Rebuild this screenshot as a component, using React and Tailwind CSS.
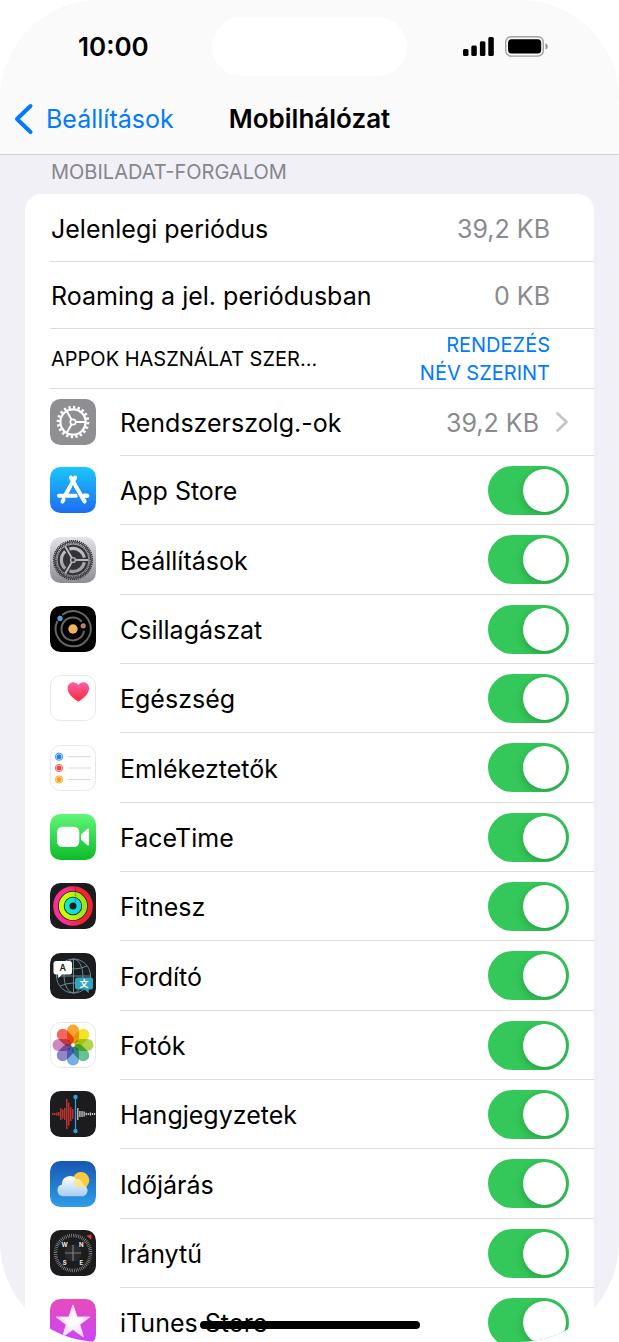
import React, { useState } from "react";

const SystemIcon = () => (
  <svg viewBox="0 0 46 46" className="mb-px size-[46px] shrink-0" aria-hidden="true">
    <rect width="46" height="46" rx="10.5" fill="#8e8e93" />
    <g fill="none" stroke="#fff">
      <circle cx="23" cy="23" r="14.8" strokeWidth="3" pathLength="80" strokeDasharray="2 2" />
      <circle cx="23" cy="23" r="12.6" strokeWidth="2.2" />
      <circle cx="23" cy="23" r="2.7" strokeWidth="1.7" />
      <path d="M26 23h9.500M21.5 20.4L16.800 12.200M21.5 25.6L16.800 33.800" strokeWidth="2" />
    </g>
  </svg>
);

const AppStoreIcon = () => (
  <svg viewBox="0 0 46 46" className="mb-px size-[46px] shrink-0" aria-hidden="true">
    <defs>
      <linearGradient id="appstore" x1="0" y1="0" x2="0" y2="1">
        <stop offset="0" stopColor="#1bc6fb" />
        <stop offset="1" stopColor="#1d6cf2" />
      </linearGradient>
    </defs>
    <rect width="46" height="46" rx="10.5" fill="url(#appstore)" />
    <g strokeLinecap="round" fill="none">
      <path d="M25.200 10.600L15.600 27.600M9 28.800H26M31.500 28.800H37.300M13.600 32.600L12.500 34.600" stroke="#fff" strokeWidth="4" />
      <path d="M24.500 17.500L34.800 34.800" stroke="#1f8ff7" strokeWidth="6" strokeLinecap="butt" />
      <path d="M33.500 28.800H37.300M20.800 10.600L34.600 34.600" stroke="#fff" strokeWidth="4" />
    </g>
  </svg>
);

const SettingsIcon = () => (
  <svg viewBox="0 0 46 46" className="mb-px size-[46px] shrink-0" aria-hidden="true">
    <defs>
      <linearGradient id="settings" x1="0" y1="0" x2="0" y2="1">
        <stop offset="0" stopColor="#e3e3e8" />
        <stop offset="1" stopColor="#8c8c91" />
      </linearGradient>
      <linearGradient id="gear" gradientUnits="userSpaceOnUse" x1="0" y1="6" x2="0" y2="40">
        <stop offset="0" stopColor="#c9c9ce" />
        <stop offset="1" stopColor="#96969b" />
      </linearGradient>
    </defs>
    <rect width="46" height="46" rx="10.5" fill="url(#settings)" />
    <circle cx="23" cy="23" r="18.800" fill="#333338" />
    <circle cx="23" cy="23" r="19.400" fill="none" stroke="#333338" strokeWidth="1.400" pathLength="120" strokeDasharray="1.200 0.800" />
    <circle cx="23" cy="23" r="17" fill="none" stroke="url(#gear)" strokeWidth="1.500" pathLength="120" strokeDasharray="1 1" />
    <circle cx="23" cy="23" r="16" fill="none" stroke="url(#gear)" strokeWidth="0.800" />
    <circle
      cx="23"
      cy="23"
      r="11.600"
      fill="none"
      stroke="url(#gear)"
      strokeWidth="3.200"
      pathLength="120"
      strokeDasharray="32 8"
      strokeDashoffset="-4"
    />
    <path d="M25 23h13.500M22 21.300L15.300 9.600M22 24.700L15.300 36.400" stroke="#b6b6bb" strokeWidth="2" fill="none" />
    <circle cx="23" cy="23" r="2.400" fill="#333338" stroke="#b6b6bb" strokeWidth="1.400" />
  </svg>
);

const AstronomyIcon = () => (
  <svg viewBox="0 0 46 46" className="mb-px size-[46px] shrink-0" aria-hidden="true">
    <rect width="46" height="46" rx="10.5" fill="#000" />
    <g fill="none" stroke="#666668" strokeWidth="2" strokeLinecap="round">
      <path d="M13.3 8.2A17.6 17.6 0 1 1 7.4 15" transform="rotate(-2 23 23)" />
      <path d="M31.2 15.2A11.4 11.4 0 1 0 34 25.5" />
    </g>
    <circle cx="23" cy="23" r="4.7" fill="#edb45a" />
    <circle cx="10" cy="12.4" r="2.6" fill="#4aa3dc" />
    <circle cx="33.2" cy="19.8" r="2.6" fill="#c07a6c" />
  </svg>
);

const HealthIcon = () => (
  <svg viewBox="0 0 46 46" className="mb-px size-[46px] shrink-0" aria-hidden="true">
    <defs>
      <linearGradient id="health" x1="0" y1="0" x2="0" y2="1">
        <stop offset="0" stopColor="#fb5fb0" />
        <stop offset="1" stopColor="#fb2a2e" />
      </linearGradient>
    </defs>
    <rect x="0.5" y="0.5" width="45" height="45" rx="10" fill="#fff" stroke="#e8e8ea" />
    <path
      d="M28.3 26.6C24 24 17.6 19.6 17.6 13.3C17.6 9.8 20.2 7.3 23.2 7.3C25.5 7.3 27.3 8.5 28.3 10C29.3 8.5 31.1 7.3 33.4 7.3C36.4 7.3 39.1 9.8 39.1 13.3C39.1 19.6 32.6 24 28.3 26.6Z"
      fill="url(#health)"
    />
  </svg>
);

const RemindersIcon = () => (
  <svg viewBox="0 0 46 46" className="mb-px size-[46px] shrink-0" aria-hidden="true">
    <rect x="0.5" y="0.5" width="45" height="45" rx="10" fill="#fff" stroke="#e8e8ea" />
    {[
      { y: 11.7, color: "#1a84f5" },
      { y: 23, color: "#f2453d" },
      { y: 34.5, color: "#f99d0d" },
    ].map((item) => (
      <g key={item.y}>
        <circle cx="9" cy={item.y} r="2.5" fill={item.color} />
        <circle cx="9" cy={item.y} r="3.6" fill="none" stroke={item.color} strokeWidth="0.9" />
        <path d={`M17.5 ${item.y}H41`} stroke="#dadadd" strokeWidth="1" />
      </g>
    ))}
  </svg>
);

const FaceTimeIcon = () => (
  <svg viewBox="0 0 46 46" className="mb-px size-[46px] shrink-0" aria-hidden="true">
    <defs>
      <linearGradient id="facetime" x1="0" y1="0" x2="0" y2="1">
        <stop offset="0" stopColor="#61f678" />
        <stop offset="1" stopColor="#0cbc2a" />
      </linearGradient>
    </defs>
    <rect width="46" height="46" rx="10.5" fill="url(#facetime)" />
    <rect x="7" y="12.7" width="22.3" height="20.3" rx="5.5" fill="#fff" />
    <path d="M31 20.4L37.2 14.9Q39 13.6 39 15.6V30.4Q39 32.4 37.2 31.1L31 25.6Z" fill="#fff" />
  </svg>
);

const FitnessIcon = () => (
  <svg viewBox="0 0 46 46" className="mb-px size-[46px] shrink-0" aria-hidden="true">
    <defs>
      <linearGradient id="ring-move" x1="0" y1="0" x2="1" y2="0">
        <stop offset="0.3" stopColor="#f92e96" />
        <stop offset="0.75" stopColor="#f8222f" />
      </linearGradient>
      <linearGradient id="ring-exercise" x1="0" y1="0" x2="1" y2="0">
        <stop offset="0.2" stopColor="#cdfb0a" />
        <stop offset="1" stopColor="#95ea12" />
      </linearGradient>
      <linearGradient id="ring-stand" x1="0" y1="0" x2="1" y2="0">
        <stop offset="0" stopColor="#12efbd" />
        <stop offset="1" stopColor="#17cdf0" />
      </linearGradient>
    </defs>
    <rect width="46" height="46" rx="10.5" fill="#1c1c1e" />
    <g fill="none" strokeWidth="4.9">
      <circle cx="23" cy="23" r="17.4" stroke="url(#ring-move)" />
      <circle cx="23" cy="23" r="11.7" stroke="url(#ring-exercise)" />
      <circle cx="23" cy="23" r="6" stroke="url(#ring-stand)" />
    </g>
    <g stroke="#1c1c1e" strokeOpacity="0.3" strokeWidth="1.4">
      <path d="M25.5 3.6v4.600M25.5 9.2v4.6M25.5 15v4.4" />
    </g>
  </svg>
);

const TranslateIcon = () => (
  <svg viewBox="0 0 46 46" className="mb-px size-[46px] shrink-0" aria-hidden="true">
    <rect width="46" height="46" rx="10.5" fill="#1c1c1e" />
    <g fill="none" stroke="#648995" strokeWidth="1">
      <circle cx="23.5" cy="23" r="17" />
      <ellipse cx="23.5" cy="23" rx="9.5" ry="17" />
      <path d="M23.5 6v34M6.5 23h34M10 13q13.5 6 27 0M10 33q13.5-6 27 0" />
    </g>
    <path d="M6 8h13.500q2.500 0 2.500 2.500v8.500q0 2.500-2.500 2.500h-7.500l-3.800 3.800v-3.800h-2.200q-2.500 0-2.500-2.500v-8.500q0-2.500 2.500-2.500Z" fill="#fff" />
    <text x="12.700" y="18.400" textAnchor="middle" className="font-['Inter'] text-[9px] font-semibold" fill="#1c1c1e">A</text>
    <path d="M27.500 24.600h13q2.500 0 2.500 2.500v7q0 2.500-2.500 2.500h-1.800v3.600l-3.700-3.600h-7.500q-2.500 0-2.500-2.500v-7q0-2.500 2.500-2.500Z" fill="#33a4bd" />
    <text x="34" y="34" textAnchor="middle" className="font-['Noto_Sans_CJK_SC',sans-serif] text-[9px] font-bold" fill="#fff">文</text>
  </svg>
);

const petals = ["#f99a1c", "#f2e00f", "#a9d138", "#55bb84", "#68a6e0", "#8878c2", "#c47fb8", "#f2564a"];

const PhotosIcon = () => (
  <svg viewBox="0 0 46 46" className="isolate mb-px size-[46px] shrink-0" aria-hidden="true">
    <rect x="0.5" y="0.5" width="45" height="45" rx="10" fill="#fff" stroke="#e8e8ea" />
    {petals.map((color, idx) => (
      <rect
        key={color}
        x="17"
        y="2.500"
        width="12"
        height="19"
        rx="6"
        fill={color}
        fillOpacity="0.9"
        className="mix-blend-multiply"
        transform={`rotate(${idx * 45} 23 23)`}
      />
    ))}
    <circle cx="23" cy="23" r="1.500" fill="#fff" />
  </svg>
);

const VoiceMemosIcon = () => (
  <svg viewBox="0 0 46 46" className="mb-px size-[46px] shrink-0" aria-hidden="true">
    <rect width="46" height="46" rx="10.5" fill="#1c1c1e" />
    {[1, 1, 1.5, 2, 6, 4.5, 6, 15, 11.5, 7, 5].map((h, idx) => (
      <path key={idx} d={`M${2.8 + idx * 2} ${23 - h}v${h * 2}`} stroke="#d5382f" strokeWidth="1.3" />
    ))}
    {[6, 3, 3, 2.5, 1.2, 1, 1.5, 1, 1].map((h, idx) => (
      <path key={idx} d={`M${27.8 + idx * 2.1} ${23 - h}v${h * 2}`} stroke="#d7d7da" strokeWidth="1.2" />
    ))}
    <path d="M25.5 6v34" stroke="#2f9fe5" strokeWidth="1.3" />
    <circle cx="25.5" cy="6" r="2.2" fill="#2f9fe5" />
    <circle cx="25.5" cy="40" r="2.2" fill="#2f9fe5" />
  </svg>
);

const WeatherIcon = () => (
  <svg viewBox="0 0 46 46" className="mb-px size-[46px] shrink-0" aria-hidden="true">
    <defs>
      <linearGradient id="sky" x1="0" y1="0" x2="0" y2="1">
        <stop offset="0" stopColor="#1757b3" />
        <stop offset="1" stopColor="#2f9de8" />
      </linearGradient>
      <linearGradient id="cloud" x1="0" y1="0" x2="0" y2="1">
        <stop offset="0" stopColor="#fff" />
        <stop offset="1" stopColor="#a5cdf2" />
      </linearGradient>
    </defs>
    <rect width="46" height="46" rx="10.5" fill="url(#sky)" />
    <circle cx="31" cy="19.3" r="8.3" fill="#fbcb3c" />
    <path
      d="M13 35.200a6 6 0 0 1-1-11.800a7.800 7.800 0 0 1 14.200-4.900a6 6 0 0 1 6.800 5.500a5.700 5.700 0 0 1-2.500 11.200Z"
      fill="url(#cloud)"
    />
    <path d="M24 19.500q1.500-1.300 3-1a6 6 0 0 1 6 5.500q1.500.5 2.200 1.700a8.300 8.300 0 0 1-11.700-2.500Z" fill="#f9e38d" fillOpacity="0.8" />
  </svg>
);

const CompassIcon = () => (
  <svg viewBox="0 0 46 46" className="mb-px size-[46px] shrink-0" aria-hidden="true">
    <rect width="46" height="46" rx="10.5" fill="#1c1c1e" />
    <circle cx="23" cy="23" r="17.5" fill="none" stroke="#a5a5a8" strokeWidth="3.5" pathLength="144" strokeDasharray="0.8 1.6" />
    <circle cx="23" cy="23" r="8.5" fill="#2a2a2c" />
    <path d="M23 15v16M15 23h16" stroke="#7d7d80" strokeWidth="1.2" />
    <path d="M41.500 4.500l-.3 5.300l-4.700-4Z" fill="#e93a32" />
    <g fill="#e8e8ea" textAnchor="middle" className="font-['Inter'] text-[6px] font-bold">
      <text x="14.6" y="17">W</text>
      <text x="31.4" y="17">N</text>
      <text x="14.6" y="34.5">S</text>
      <text x="31.4" y="34.5">E</text>
    </g>
  </svg>
);

const ITunesIcon = () => (
  <svg viewBox="0 0 46 46" className="mb-px size-[46px] shrink-0" aria-hidden="true">
    <defs>
      <linearGradient id="itunes" x1="0" y1="0" x2="0" y2="1">
        <stop offset="0" stopColor="#e94cb9" />
        <stop offset="1" stopColor="#c644fb" />
      </linearGradient>
      <radialGradient id="star">
        <stop offset="0.2" stopColor="#fff" />
        <stop offset="1" stopColor="#f7d3f7" />
      </radialGradient>
    </defs>
    <rect width="46" height="46" rx="10.5" fill="url(#itunes)" />
    <path
      d="M23 6L27.200 18H39.800L29.800 25.600L33.500 38L23 30.600L12.500 38L16.200 25.600L6.200 18H18.800Z"
      fill="url(#star)"
      stroke="#fbe4fa"
      strokeWidth="0.8"
      strokeLinejoin="round"
    />
  </svg>
);

const apps = [
  { name: "App Store", Icon: AppStoreIcon },
  { name: "Beállítások", Icon: SettingsIcon },
  { name: "Csillagászat", Icon: AstronomyIcon },
  { name: "Egészség", Icon: HealthIcon },
  { name: "Emlékeztetők", Icon: RemindersIcon },
  { name: "FaceTime", Icon: FaceTimeIcon },
  { name: "Fitnesz", Icon: FitnessIcon },
  { name: "Fordító", Icon: TranslateIcon },
  { name: "Fotók", Icon: PhotosIcon },
  { name: "Hangjegyzetek", Icon: VoiceMemosIcon },
  { name: "Időjárás", Icon: WeatherIcon },
  { name: "Iránytű", Icon: CompassIcon },
  { name: "iTunes Store", Icon: ITunesIcon },
];

const StatusBar = () => (
  <div className="grid grid-cols-[1fr_195px_1fr] items-center pt-[17px]">
    <p className="pl-[78px] text-[26px] leading-8 font-semibold">10:00</p>
    <div className="h-[59px] rounded-full bg-white" />
    <div className="flex items-center justify-end gap-[11px] pr-[71px]">
      <svg viewBox="0 0 31 20" className="h-5 w-[31px]" aria-hidden="true">
        <rect x="0" y="12" width="5.500" height="7" rx="1.500" />
        <rect x="8.300" y="8.500" width="5.500" height="10.500" rx="1.500" />
        <rect x="16.900" y="4.200" width="5.500" height="14.800" rx="1.500" />
        <rect x="25.300" y="0" width="5.500" height="19" rx="1.500" />
      </svg>
      <svg viewBox="0 0 43 21" className="h-[21px] w-[43px]" aria-hidden="true">
        <rect x="0.700" y="0.700" width="37.600" height="19.400" rx="5.500" fill="none" stroke="#a0a0a0" strokeWidth="1.400" />
        <rect x="3" y="3.200" width="33.200" height="14.400" rx="3.500" />
        <path d="M40.500 7.200q2.200 1 2.200 3.200t-2.200 3.200Z" fill="#8a8a8a" />
      </svg>
    </div>
  </div>
);

const App = () => {
  const [enabled, setEnabled] = useState(apps.map((app) => app.name));

  const toggleApp = (name) => {
    setEnabled((prev) =>
      prev.includes(name) ? prev.filter((item) => item !== name) : [...prev, name]
    );
  };

  return (
    <div className="h-screen bg-white font-['Inter',sans-serif] text-black">
      <div className="relative flex h-full flex-col overflow-hidden rounded-[100px] bg-[#f1f0f6]">
        <header className="shrink-0 border-b border-[#d0d0d3] bg-[#fafafa]">
          <StatusBar />
          <nav className="grid h-[78px] grid-cols-[1fr_auto_1fr] items-center pt-2">
            <a href="#beallitasok" className="flex items-center gap-3 pl-[14px] text-[25px] leading-8 text-[#007aff]">
              <svg viewBox="0 0 20 32" className="h-8 w-5" fill="none" aria-hidden="true">
                <path d="M16.500 3L3 16L16.500 29" stroke="currentColor" strokeWidth="4" strokeLinecap="round" strokeLinejoin="round" />
              </svg>
              Beállítások
            </a>
            <h1 className="text-[26px] leading-8 font-semibold">Mobilhálózat</h1>
          </nav>
        </header>

        <main className="min-h-0 flex-1 overflow-hidden px-[25px]">
          <h2 className="px-[26px] pt-px pb-[6px] text-[20px] leading-8 text-[#86868b]">MOBILADAT-FORGALOM</h2>

          <div className="rounded-t-2xl bg-white pl-[25px]">
            {/* Usage totals */}
            <dl className="text-[25px] leading-8">
              <div className="flex h-[68px] items-center justify-between border-b border-[#dddddf] pt-[2px] pr-[44px] pl-px">
                <dt>Jelenlegi periódus</dt>
                <dd className="text-[#8a8a8e]">39,2 KB</dd>
              </div>
              <div className="flex h-[67px] items-center justify-between border-b border-[#dddddf] pt-[2px] pr-[44px] pl-px">
                <dt>Roaming a jel. periódusban</dt>
                <dd className="text-[#8a8a8e]">0 KB</dd>
              </div>
            </dl>

            <div className="flex items-center justify-between border-b border-[#dddddf] pt-[2px] pr-[44px] pb-px pl-px text-[20px] leading-7">
              <h3>APPOK HASZNÁLAT SZER...</h3>
              <button type="button" className="text-right text-[#007aff]">
                RENDEZÉS
                <br />
                NÉV SZERINT
              </button>
            </div>

            <a href="#rendszer" className="flex h-[67px] items-center gap-6 text-[25px] leading-8">
              <SystemIcon />
              <span className="flex h-full flex-1 items-center border-b border-[#dddddf] pr-[25px]">
                <span className="flex-1 pt-[2px]">Rendszerszolg.-ok</span>
                <span className="pt-[2px] text-[#8a8a8e]">39,2 KB</span>
                <svg viewBox="0 0 14 20" className="ml-4 h-5 w-[14px]" fill="none" aria-hidden="true">
                  <path d="M2.500 1.500L11.500 10L2.500 18.500" stroke="#c4c4c7" strokeWidth="2.600" strokeLinecap="round" strokeLinejoin="round" />
                </svg>
              </span>
            </a>

            {/* Per-app switches */}
            <ul className="text-[25px] leading-8">
              {apps.map(({ name, Icon }) => (
                <li key={name} className="h-[69px] nth-[3n+2]:h-[70px]">
                  <label className="flex h-full items-center gap-6">
                    <Icon />
                    <span className="flex h-full flex-1 items-center justify-between border-b border-[#dddddf] pr-[25px]">
                      <span className="pt-[2px]">{name}</span>
                      <input
                        type="checkbox"
                        role="switch"
                        checked={enabled.includes(name)}
                        onChange={() => toggleApp(name)}
                        className="flex h-[49px] w-[81px] appearance-none items-center overflow-hidden rounded-full bg-[#e9e9ea] px-[3px] before:size-[43px] before:rounded-full before:bg-white before:shadow-[0_3px_8px_rgba(0,0,0,0.2)] checked:justify-end checked:bg-[#34c759]"
                      />
                    </span>
                  </label>
                </li>
              ))}
            </ul>
          </div>
        </main>

        {/* Home indicator */}
        <div className="absolute bottom-[13px] left-1/2 h-2 w-[220px] -translate-x-1/2 rounded-full bg-black" />
      </div>
    </div>
  );
};

export default App;
